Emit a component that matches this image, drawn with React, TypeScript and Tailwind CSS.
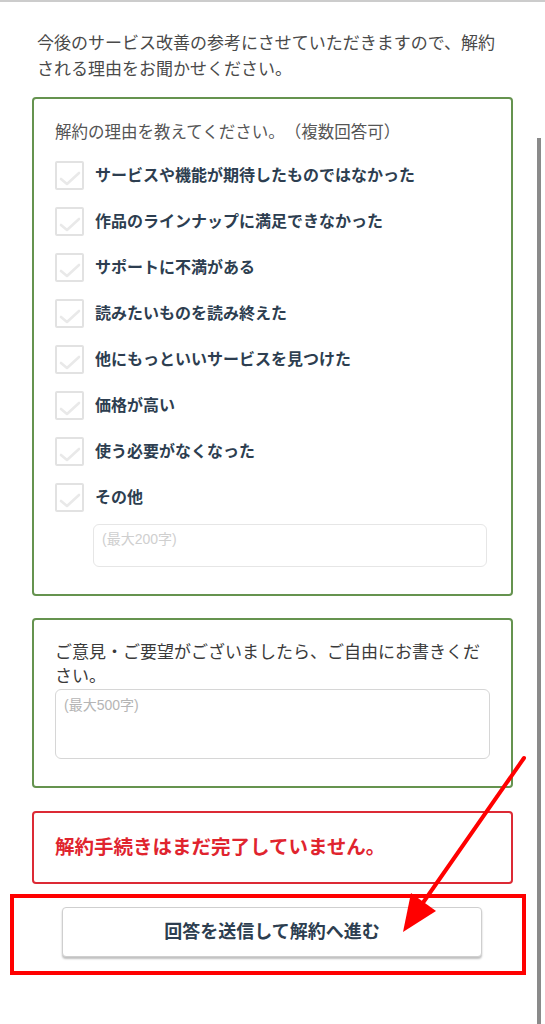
import React from "react";

const reasons = [
  "サービスや機能が期待したものではなかった",
  "作品のラインナップに満足できなかった",
  "サポートに不満がある",
  "読みたいものを読み終えた",
  "他にもっといいサービスを見つけた",
  "価格が高い",
  "使う必要がなくなった",
  "その他",
];

function Check() {
  return (
    <div className="w-[29px] h-[29px] shrink-0 border-2 border-[#e2e2e2] rounded-[2px] bg-white flex items-center justify-center">
      <svg width="25" height="25" viewBox="0 0 25 25">
        <path d="M4 16 L10 21 L22 10" fill="none" stroke="#e9e9e9" strokeWidth="2.6" strokeLinecap="round" strokeLinejoin="round" />
      </svg>
    </div>
  );
}

export default function App() {
  return (
    <div
      className="relative w-[545px] min-h-[1024px] bg-white overflow-hidden [text-spacing-trim:space-all]"
      style={{ fontFamily: '"Liberation Sans", "Noto Sans CJK JP", sans-serif' }}
    >
      <div className="h-[2px] bg-[#cccccc]" />
      <div className="pt-[29px] px-[37px] text-[17px] leading-[26px] text-[#4a4a4a]">
        今後のサービス改善の参考にさせていただきますので、解約される理由をお聞かせください。
      </div>

      <div className="mx-[32px] mt-[14px] border-2 border-[#65934f] rounded-[4px] pt-[21px] pb-[27px] px-[21px]">
        <div className="text-[16.5px] leading-[24px] text-[#555555]">解約の理由を教えてください。（複数回答可）</div>
        <div className="mt-[17px] flex flex-col gap-[17px]">
          {reasons.map((r) => (
            <div key={r} className="flex items-center gap-[11px]">
              <Check />
              <span className="text-[16px] font-bold text-[#2d3e50] leading-[20px]">{r}</span>
            </div>
          ))}
        </div>
        <div className="mt-[12px] ml-[38px] w-[394px] h-[43px] border border-[#e6e6e6] rounded-[6px] px-[8px] pt-[5px] text-[14px] leading-[18px] text-[#cfcfcf]">
          (最大200字)
        </div>
      </div>

      <div className="mx-[32px] mt-[22px] border-2 border-[#65934f] rounded-[4px] pt-[21px] pb-[27px] px-[21px]">
        <div className="text-[17px] leading-[24px] text-[#3a3a3a]">
          ご意見・ご要望がございましたら、ご自由にお書きください。
        </div>
        <div className="w-[435px] h-[70px] border border-[#d6d6d6] rounded-[6px] px-[8px] pt-[6px] text-[14px] leading-[18px] text-[#b5b5b5]">
          (最大500字)
        </div>
      </div>

      <div className="mx-[32px] mt-[23px] h-[73px] border-2 border-[#dc2a35] rounded-[4px] flex items-center pl-[21px]">
        <span className="text-[19.5px] font-bold text-[#e0242e]">解約手続きはまだ完了していません。</span>
      </div>

      <div className="ml-[10px] mt-[10px] w-[516px] h-[81px] border-4 border-[#ff0000] pt-[9px] pl-[48px]">
        <div className="w-[420px] h-[50px] bg-white border border-[#cfcfcf] rounded-[4px] shadow-[0_2px_2px_rgba(0,0,0,0.25)] flex items-center justify-center">
          <span className="text-[18px] font-bold text-[#2d3e50]">回答を送信して解約へ進む</span>
        </div>
      </div>

      {/* scrollbar */}
      <div className="absolute left-[537px] top-[138px] w-[4px] h-[886px] bg-[#8a8a8a]" />

      {/* annotation arrow */}
      <svg className="absolute left-0 top-0 pointer-events-none" width="545" height="1024" viewBox="0 0 545 1024">
        <line x1="524" y1="758" x2="420" y2="907" stroke="#ff0000" strokeWidth="4" strokeLinecap="round" />
        <polygon points="403,932 436,911 411,893" fill="#ff0000" />
      </svg>
    </div>
  );
}
